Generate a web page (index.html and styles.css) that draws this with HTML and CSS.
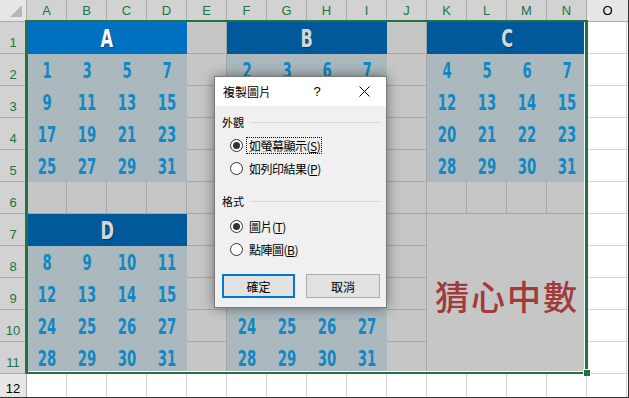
FILE: index.html
```html
<!DOCTYPE html>
<html lang="zh-Hant">
<head>
  <meta charset="UTF-8" />
  <title>猜心中數</title>
  <link rel="stylesheet" href="styles.css">
</head>
<body>
  <div class="page">
    <div class="colheads">
      <div class="corner"><span class="tri"></span></div>
      <div class="ch sel">A</div>
      <div class="ch sel">B</div>
      <div class="ch sel">C</div>
      <div class="ch sel">D</div>
      <div class="ch sel">E</div>
      <div class="ch sel">F</div>
      <div class="ch sel">G</div>
      <div class="ch sel">H</div>
      <div class="ch sel">I</div>
      <div class="ch sel">J</div>
      <div class="ch sel">K</div>
      <div class="ch sel">L</div>
      <div class="ch sel">M</div>
      <div class="ch sel">N</div>
      <div class="ch last">O</div>
    </div>

    <div class="main">
      <div class="rowheads">
        <div class="rh sel">1</div>
        <div class="rh sel">2</div>
        <div class="rh sel">3</div>
        <div class="rh sel">4</div>
        <div class="rh sel">5</div>
        <div class="rh sel">6</div>
        <div class="rh sel">7</div>
        <div class="rh sel">8</div>
        <div class="rh sel">9</div>
        <div class="rh sel">10</div>
        <div class="rh sel">11</div>
        <div class="rh last">12</div>
      </div>

      <div class="cells">
        <div class="fill"></div>

        <div class="block blk-a">
          <div class="hd"><b>A</b></div>
          <span>1</span><span>3</span><span>5</span><span>7</span>
          <span>9</span><span>11</span><span>13</span><span>15</span>
          <span>17</span><span>19</span><span>21</span><span>23</span>
          <span>25</span><span>27</span><span>29</span><span>31</span>
        </div>

        <!-- rows 3-5 of B sit under the dialog -->
        <div class="block blk-b">
          <div class="hd"><b>B</b></div>
          <span>2</span><span>3</span><span>6</span><span>7</span>
          <span></span><span></span><span></span><span></span>
          <span></span><span></span><span></span><span></span>
          <span></span><span></span><span></span><span></span>
        </div>

        <div class="block blk-c">
          <div class="hd"><b>C</b></div>
          <span>4</span><span>5</span><span>6</span><span>7</span>
          <span>12</span><span>13</span><span>14</span><span>15</span>
          <span>20</span><span>21</span><span>22</span><span>23</span>
          <span>28</span><span>29</span><span>30</span><span>31</span>
        </div>

        <div class="block blk-d">
          <div class="hd"><b>D</b></div>
          <span>8</span><span>9</span><span>10</span><span>11</span>
          <span>12</span><span>13</span><span>14</span><span>15</span>
          <span>24</span><span>25</span><span>26</span><span>27</span>
          <span>28</span><span>29</span><span>30</span><span>31</span>
        </div>

        <!-- header and first rows of E are hidden by the dialog -->
        <div class="block blk-e">
          <div class="hd"></div>
          <span></span><span></span><span></span><span></span>
          <span></span><span></span><span></span><span></span>
          <span>24</span><span>25</span><span>26</span><span>27</span>
          <span>28</span><span>29</span><span>30</span><span>31</span>
        </div>

        <div class="merged">猜心中數</div>
      </div>
    </div>

    <div class="selection"><span class="handle"></span></div>

    <div class="dialog">
      <div class="titlebar">
        <span class="title">複製圖片</span>
        <span class="help">?</span>
        <span class="close">
          <svg width="11" height="11" viewBox="0 0 11 11"><path d="M0.5 0.5 L10.5 10.5 M10.5 0.5 L0.5 10.5" stroke="#000" stroke-width="1" fill="none"/></svg>
        </span>
      </div>
      <div class="dlg-body">
        <div class="group-title"><span>外觀</span><i class="rule"></i></div>
        <div class="options">
          <div class="opt"><span class="radio on"></span><span class="lbl focus">如螢幕顯示(<u>S</u>)</span></div>
          <div class="opt"><span class="radio"></span><span class="lbl">如列印結果(<u>P</u>)</span></div>
        </div>

        <div class="group-title second"><span>格式</span><i class="rule"></i></div>
        <div class="options">
          <div class="opt"><span class="radio on"></span><span class="lbl">圖片(<u>T</u>)</span></div>
          <div class="opt"><span class="radio"></span><span class="lbl">點陣圖(<u>B</u>)</span></div>
        </div>

        <div class="buttons">
          <button class="btn ok">確定</button>
          <button class="btn cancel">取消</button>
        </div>
      </div>
    </div>
  </div>
</body>
</html>
```

FILE: styles.css
```css
body {
  margin: 0;
  background: #fff;
}

.page {
  position: relative;
  width: 628px;
  height: 397px;
  overflow: hidden;
  border-right: 1px solid #333;
  border-bottom: 1px solid #333;
  font-family: "Liberation Sans", Arial, sans-serif;
}

/* headers */
.colheads {
  display: grid;
  grid-template-columns: 27px repeat(14, 40px) 1fr;
  height: 22px;
}

.corner {
  background: #e6e6e6;
  border-right: 1px solid #ababab;
  border-bottom: 1px solid #ababab;
  display: flex;
  justify-content: flex-end;
  align-items: flex-end;
  padding: 0 4px 4px 0;
}

.tri {
  width: 0;
  height: 0;
  border-left: 12px solid transparent;
  border-bottom: 12px solid #b6b6b6;
}

.ch {
  box-sizing: border-box;
  border-right: 1px solid #ababab;
  border-bottom: 1px solid #ababab;
  background: #d2d2d2;
  color: #217346;
  font-size: 13px;
  line-height: 21px;
  text-align: center;
}

.ch.last {
  background: #e6e6e6;
  color: #000;
  border-right: none;
}

.main {
  display: flex;
  height: 375px;
}

.rowheads {
  width: 27px;
  display: flex;
  flex-direction: column;
}

.rh {
  box-sizing: border-box;
  height: 32px;
  flex-shrink: 0;
  background: #d2d2d2;
  color: #217346;
  border-right: 1px solid #ababab;
  border-bottom: 1px solid #ababab;
  font-size: 13px;
  display: flex;
  justify-content: center;
  align-items: flex-end;
  padding-bottom: 3px;
}

.rh.last {
  flex: 1;
  height: auto;
  background: #e6e6e6;
  color: #000;
  border-bottom: none;
  padding-bottom: 1px;
}

/* sheet */
.cells {
  flex: 1;
  display: grid;
  grid-template-columns: repeat(14, 40px) 1fr;
  grid-template-rows: repeat(11, 32px) 1fr;
  background-color: #fff;
  background-image:
    linear-gradient(to right, transparent 39px, #d4d4d4 39px),
    linear-gradient(to bottom, transparent 31px, #d4d4d4 31px);
  background-size: 40px 100%, 100% 32px;
}

.fill {
  grid-column: 1 / 15;
  grid-row: 1 / 12;
  background-color: #c6c6c6;
  background-image:
    linear-gradient(to right, transparent 39px, #a6a6a6 39px),
    linear-gradient(to bottom, transparent 31px, #a6a6a6 31px);
  background-size: 40px 100%, 100% 32px;
}

.block {
  display: grid;
  grid-template-columns: repeat(4, 1fr);
  grid-template-rows: repeat(5, 1fr);
  background: #abb9bf;
}

.blk-a { grid-column: 1 / 5; grid-row: 1 / 6; }
.blk-b { grid-column: 6 / 10; grid-row: 1 / 6; }
.blk-c { grid-column: 11 / 15; grid-row: 1 / 6; }
.blk-d { grid-column: 1 / 5; grid-row: 7 / 12; }
.blk-e { grid-column: 6 / 10; grid-row: 7 / 12; }

.block .hd {
  grid-column: 1 / -1;
  background: #00599b;
  color: #d6d6d6;
  display: flex;
  justify-content: center;
  align-items: center;
  font: bold 25px "DejaVu Sans Condensed", sans-serif;
  text-shadow: 1px 1px 1px rgba(0, 0, 0, 0.35);
}

.block .hd b {
  display: block;
  transform: scaleX(0.72);
}

.blk-a .hd {
  background: #0070c0;
  color: #fff;
}

.block span {
  display: flex;
  justify-content: center;
  align-items: center;
  padding-top: 1px;
  font: bold 21px "DejaVu Sans Condensed", sans-serif;
  color: #1187c3;
  transform: scaleX(0.7);
}

.merged {
  grid-column: 11 / 15;
  grid-row: 7 / 12;
  background: #c6c6c6;
  display: flex;
  justify-content: center;
  align-items: center;
  font-family: "Noto Sans CJK TC", sans-serif;
  font-size: 34px;
  font-weight: 500;
  letter-spacing: 2px;
  color: #a13a3a;
  padding-top: 2px;
}

/* selection outline */
.selection {
  position: absolute;
  left: 25px;
  top: 20px;
  width: 563px;
  height: 354px;
  box-sizing: border-box;
  border-style: solid;
  border-color: #217346;
  border-width: 2px 3px 2px 3px;
  box-shadow: inset -1px -1px 0 #fff;
}

.handle {
  position: absolute;
  right: -6px;
  bottom: -5px;
  width: 6px;
  height: 6px;
  background: #217346;
  border: 1px solid #fff;
}

/* dialog */
.dialog {
  position: absolute;
  left: 214px;
  top: 76px;
  width: 173px;
  height: 232px;
  box-sizing: border-box;
  border: 1px solid #7a7a7a;
  background: #f0f0f0;
  box-shadow: 0 0 12px rgba(0, 0, 0, 0.45);
  font-family: "Noto Sans CJK TC", sans-serif;
  color: #000;
}

.titlebar {
  height: 29px;
  background: #fff;
  display: flex;
  align-items: center;
  padding: 0 12px 0 8px;
  font-size: 12px;
}

.title {
  flex: 1;
}

.help {
  width: 12px;
  text-align: center;
  margin-right: 31px;
  font-family: "Liberation Sans", sans-serif;
  font-size: 13px;
}

.close {
  width: 20px;
  display: flex;
  justify-content: center;
}

.dlg-body {
  padding: 8px 5px 0 7px;
}

.group-title {
  display: flex;
  align-items: center;
  height: 16px;
  font-size: 11px;
}

.group-title.second {
  margin-top: 13px;
}

.rule {
  flex: 1;
  height: 1px;
  background: #d8d8d8;
  margin-left: 6px;
}

.options {
  margin-top: 4px;
}

.group-title.second + .options {
  margin-top: 6px;
}

.opt {
  height: 23px;
  display: flex;
  align-items: center;
}

.radio {
  width: 13px;
  height: 13px;
  box-sizing: border-box;
  margin-left: 8px;
  border: 1px solid #333;
  border-radius: 50%;
  background: #fff;
  display: flex;
  justify-content: center;
  align-items: center;
}

.radio.on::after {
  content: "";
  width: 7px;
  height: 7px;
  border-radius: 50%;
  background: #333;
}

.lbl {
  margin-left: 3px;
  padding: 0 1px 0 2px;
  border: 1px solid transparent;
  font-size: 12px;
  line-height: 15px;
  letter-spacing: -0.5px;
}

.lbl.focus {
  border: 1px dotted #000;
}

.buttons {
  display: flex;
  margin-top: 13px;
}

.btn {
  height: 24px;
  box-sizing: border-box;
  background: #e1e1e1;
  border: 1px solid #adadad;
  font-family: "Noto Sans CJK TC", sans-serif;
  font-size: 12px;
  padding: 0;
  color: #000;
}

.btn.ok {
  width: 73px;
  border: 2px solid #0078d7;
}

.btn.cancel {
  width: 74px;
  margin-left: 11px;
}
```
